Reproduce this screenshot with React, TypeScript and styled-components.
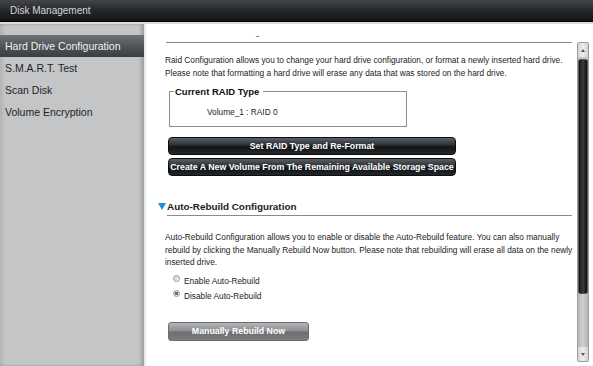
import styled, { createGlobalStyle } from "styled-components";

const GlobalStyle = createGlobalStyle`
  html, body {
    margin: 0;
    padding: 0;
    background: #ffffff;
  }
  body {
    font-family: "Liberation Sans", Arial, sans-serif;
  }
`;

const navItems = [
  "Hard Drive Configuration",
  "S.M.A.R.T. Test",
  "Scan Disk",
  "Volume Encryption",
];

const App = () => (
  <>
    <GlobalStyle />
    <Window>
      <TitleBar>Disk Management</TitleBar>
      <Body>
        <Sidebar>
          {navItems.map((item, i) => (
            <NavItem key={item} $active={i === 0}>
              {item}
            </NavItem>
          ))}
        </Sidebar>
        <Main>
          <Content>
            <TopRule>
              <Dash>-</Dash>
            </TopRule>
            <Paragraph>
              Raid Configuration allows you to change your hard drive
              configuration, or format a newly inserted hard drive.
              <br />
              Please note that formatting a hard drive will erase any data that
              was stored on the hard drive.
            </Paragraph>
            <RaidBox>
              <Legend>Current RAID Type</Legend>
              <VolumeText>Volume_1 : RAID 0</VolumeText>
            </RaidBox>
            <ButtonStack>
              <DarkButton>Set RAID Type and Re-Format</DarkButton>
              <DarkButton>
                Create A New Volume From The Remaining Available Storage Space
              </DarkButton>
            </ButtonStack>
            <SectionHeading>
              <Triangle />
              Auto-Rebuild Configuration
            </SectionHeading>
            <Paragraph $gap={16}>
              Auto-Rebuild Configuration allows you to enable or disable the
              Auto-Rebuild feature. You can also manually
              <br />
              rebuild by clicking the Manually Rebuild Now button. Please note
              that rebuilding will erase all data on the newly
              <br />
              inserted drive.
            </Paragraph>
            <RadioList>
              <RadioRow>
                <Radio />
                Enable Auto-Rebuild
              </RadioRow>
              <RadioRow>
                <Radio $checked />
                Disable Auto-Rebuild
              </RadioRow>
            </RadioList>
            <GrayButton>Manually Rebuild Now</GrayButton>
          </Content>
          <Scrollbar>
            <ScrollArrow>
              <ArrowGlyph />
            </ScrollArrow>
            <Thumb />
            <Track />
            <ScrollArrow>
              <ArrowGlyph $down />
            </ScrollArrow>
          </Scrollbar>
        </Main>
      </Body>
    </Window>
  </>
);

const Window = styled.div`
  width: 593px;
  height: 366px;
  display: flex;
  flex-direction: column;
  overflow: hidden;
`;

const TitleBar = styled.div`
  height: 22px;
  flex-shrink: 0;
  display: flex;
  align-items: center;
  padding-left: 10px;
  background: linear-gradient(#41464b, #25282b 50%, #121314);
  color: #d6d6d6;
  font-size: 10px;
  border-bottom: 1px solid #000;
  box-sizing: border-box;
`;

const Body = styled.div`
  flex: 1;
  display: flex;
  border-top: 2px solid #dadbdc;
  min-height: 0;
`;

const Sidebar = styled.div`
  width: 146px;
  flex-shrink: 0;
  box-sizing: border-box;
  padding-top: 11px;
  background: #c4c5c7;
  border-right: 2px solid #e4e8e8;
  box-shadow: inset -3px 0 3px rgba(0, 0, 0, 0.18),
    inset 3px 0 3px rgba(0, 0, 0, 0.08);
`;

const NavItem = styled.div<{ $active?: boolean }>`
  height: 22px;
  display: flex;
  align-items: center;
  padding-left: 5px;
  font-size: 10.5px;
  color: ${(p) => (p.$active ? "#f2f2f2" : "#1e1e1e")};
  background: ${(p) =>
    p.$active ? "linear-gradient(#6f7276, #4e5155 55%, #3a3d41)" : "none"};
`;

const Main = styled.div`
  flex: 1;
  display: flex;
  background: #ffffff;
  padding: 0 4px 4px 20px;
  min-width: 0;
`;

const Content = styled.div`
  flex: 1;
  padding-right: 5px;
  color: #1c1c1c;
`;

const TopRule = styled.div`
  height: 18px;
  border-bottom: 1px solid #8a8a8a;
  padding-left: 90px;
  display: flex;
  align-items: flex-end;
`;

const Dash = styled.span`
  font-size: 9px;
  line-height: 12px;
`;

const Paragraph = styled.p<{ $gap?: number }>`
  margin: ${(p) => p.$gap ?? 11}px 0 0 -1px;
  font-size: 8.3px;
  line-height: 12.5px;
  white-space: nowrap;
`;

const RaidBox = styled.fieldset`
  width: 238px;
  box-sizing: border-box;
  margin: 7px 0 0 3px;
  padding: 0 0 9px 37px;
  border: 1px solid #8e8e8e;
`;

const Legend = styled.legend`
  margin-left: -33px;
  padding: 0 4px 0 1px;
  font-size: 9.5px;
  font-weight: bold;
  color: #111;
`;

const VolumeText = styled.div`
  font-size: 8.3px;
  line-height: 10px;
  margin-top: 10px;
`;

const ButtonStack = styled.div`
  display: flex;
  flex-direction: column;
  gap: 3px;
  margin: 10px 0 0 2px;
`;

const DarkButton = styled.div`
  width: 288px;
  height: 18px;
  box-sizing: border-box;
  display: flex;
  align-items: center;
  justify-content: center;
  border-radius: 4px;
  border: 1px solid #0d0d0d;
  background: linear-gradient(#5a6066, #2a2e32 45%, #121416 55%, #22262a);
  color: #ffffff;
  font-size: 8.8px;
  font-weight: bold;
  white-space: nowrap;
`;

const SectionHeading = styled.div`
  margin: 21px 0 0 -8px;
  height: 18px;
  display: flex;
  align-items: center;
  gap: 1px;
  font-size: 9.9px;
  font-weight: bold;
  color: #1a1a1a;
  position: relative;
  &::after {
    content: "";
    position: absolute;
    left: 9px;
    right: 0;
    bottom: -1px;
    border-bottom: 1px solid #8a8a8a;
  }
`;

const Triangle = styled.span`
  width: 0;
  height: 0;
  border-left: 4.5px solid transparent;
  border-right: 4.5px solid transparent;
  border-top: 7px solid #1b8de0;
`;

const RadioList = styled.div`
  margin: 6px 0 0 7px;
  display: flex;
  flex-direction: column;
  gap: 3px;
`;

const RadioRow = styled.div`
  display: flex;
  align-items: center;
  gap: 4px;
  font-size: 8.3px;
  height: 12px;
`;

const Radio = styled.span<{ $checked?: boolean }>`
  width: 7px;
  height: 7px;
  border-radius: 50%;
  box-sizing: border-box;
  border: 1px solid #9a9a9a;
  background: ${(p) =>
    p.$checked
      ? "radial-gradient(circle, #6a6a6a 0 1.5px, #e4e4e4 2px)"
      : "linear-gradient(135deg, #cfcfcf, #f4f4f4)"};
  margin-top: -4px;
`;

const GrayButton = styled.div`
  margin: 20px 0 0 2px;
  width: 141px;
  height: 19px;
  box-sizing: border-box;
  display: flex;
  align-items: center;
  justify-content: center;
  border-radius: 3px;
  border: 1px solid #6a6c6e;
  background: linear-gradient(#b4b6b8, #8c8e91 45%, #6c6e71 55%, #7a7c7f);
  color: #ffffff;
  font-size: 8.8px;
  font-weight: bold;
`;

const Scrollbar = styled.div`
  width: 12px;
  margin-top: 18px;
  display: flex;
  flex-direction: column;
  border: 1px solid #9c9c9c;
  border-radius: 2px;
  background: #c8c8c8;
`;

const ScrollArrow = styled.div`
  height: 14px;
  flex-shrink: 0;
  display: flex;
  align-items: center;
  justify-content: center;
  background: linear-gradient(90deg, #d4d4d4, #eeeeee 50%, #cfcfcf);
`;

const ArrowGlyph = styled.span<{ $down?: boolean }>`
  width: 0;
  height: 0;
  border-left: 2.5px solid transparent;
  border-right: 2.5px solid transparent;
  ${(p) =>
    p.$down ? "border-top: 3px solid #555;" : "border-bottom: 3px solid #555;"}
`;

const Thumb = styled.div`
  height: 233px;
  margin-top: 2px;
  flex-shrink: 0;
  border: 1px solid #5a5a5a;
  border-radius: 2px;
  background: linear-gradient(90deg, #111, #3a3e42 50%, #0c0c0c);
`;

const Track = styled.div`
  flex: 1;
  background: linear-gradient(90deg, #b8b8b8, #cfcfcf 50%, #b4b4b4);
`;

export default App;
